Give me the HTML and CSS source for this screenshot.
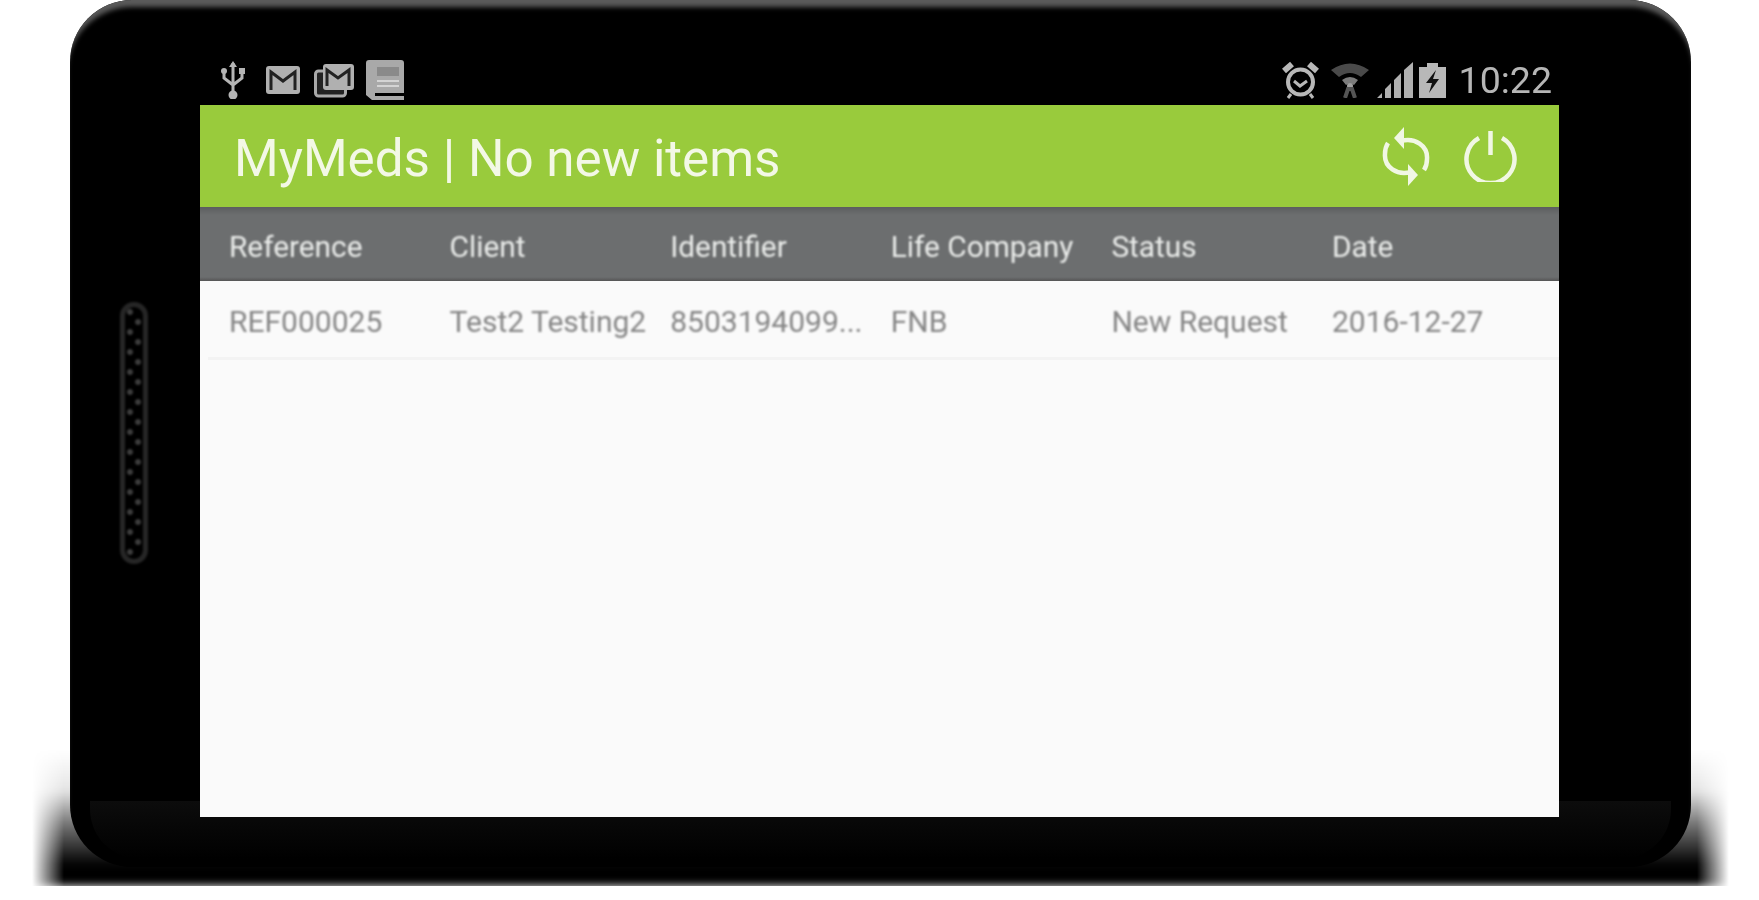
FILE: index.html
```html
<!DOCTYPE html>
<html lang="en">
<head>
  <meta charset="UTF-8">
  <meta name="viewport" content="width=device-width, initial-scale=1.0">
  <title>MyMeds</title>
  <link rel="stylesheet" href="styles.css">
</head>
<body>
  <div class="phone">
    <div class="speaker"></div>
    <div class="chin"></div>

    <div class="statusbar">
      <div class="status-left">
        <svg class="ico-usb" viewBox="0 0 26 38" fill="none" stroke="#b4b4b4" stroke-width="3">
          <path d="M13 2v32M4 11v6l9 7 9-7v-6"/>
          <circle cx="13" cy="34" r="3" fill="#b4b4b4"/>
          <circle cx="4" cy="10" r="3" fill="#b4b4b4" stroke="none"/>
          <rect x="19" y="7" width="6" height="6" fill="#b4b4b4" stroke="none"/>
          <path d="M13 0l4 6h-8z" fill="#b4b4b4" stroke="none"/>
        </svg>
        <svg class="ico-mail" viewBox="0 0 34 28">
          <rect width="34" height="28" rx="3" fill="#b0b0b0"/>
          <path d="M5 24V6l12 9 12-9v18" fill="none" stroke="#222" stroke-width="3"/>
        </svg>
        <svg class="ico-mails" viewBox="0 0 40 35">
          <rect x="1.500" y="8" width="30" height="25" rx="3" fill="#222" stroke="#a8a8a8" stroke-width="3"/>
          <rect x="9" y="1" width="31" height="26" rx="3" fill="#b0b0b0"/>
          <path d="M13 23V7l11 8 11-8v16" fill="none" stroke="#222" stroke-width="3"/>
        </svg>
        <svg class="ico-book" viewBox="0 0 38 40">
          <path d="M3 0h32a3 3 0 0 1 3 3v30H9v3h29v4H6l-6-5V3a3 3 0 0 1 3-3z" fill="#a9a9a9"/>
          <rect x="11" y="7" width="22" height="9" fill="#8a8a8a"/>
          <path d="M11 21h22M11 26h22" stroke="#d4d4d4" stroke-width="2"/>
        </svg>
      </div>
      <div class="status-right">
        <svg class="ico-alarm" viewBox="0 0 37 38" fill="none" stroke="#b8b8b8">
          <circle cx="18.500" cy="21" r="12.500" stroke-width="4"/>
          <path d="M12 20l6 5 7-5" stroke-width="3"/>
          <path d="M2 10l8-7M35 10l-8-7" stroke-width="6"/>
          <path d="M9 33l-3 4M28 33l3 4" stroke-width="3"/>
        </svg>
        <svg class="ico-wifi" viewBox="0 0 38 36">
          <path d="M0 8Q19-5 38 8L30 15Q19 7 8 15z" fill="#4a4a4a"/>
          <path d="M11 18q8-6 16 0l-4 5q-4-3-8 0z" fill="#7c7c7c"/>
          <circle cx="19" cy="24" r="3" fill="#a0a0a0"/>
          <path d="M14 36l3-9h4l3 9" fill="none" stroke="#555" stroke-width="4"/>
        </svg>
        <svg class="ico-signal" viewBox="0 0 36 36" fill="#b0b0b0">
          <path d="M0 36l5-5v5zM8 36V27l6-6v15zM17 36V18l7-7v25zM27 36V8l9-8v36z"/>
        </svg>
        <svg class="ico-battery" viewBox="0 0 27 36">
          <path d="M0 5h8V1h11v4h8v31H0z" fill="#b8b8b8"/>
          <path d="M17 8L7 21h6l-3 10 10-14h-6z" fill="#111"/>
        </svg>
        <span class="clock">10:22</span>
      </div>
    </div>

    <div class="screen">
      <div class="appbar">
        <h1 class="title">MyMeds | No new items</h1>
        <div class="actions">
          <svg class="ico-sync" viewBox="0 0 48 61" fill="none" stroke="#f1f7e4" stroke-width="4.500">
            <path d="M19 15C33 11 46 20 45 33c0 5-1 8-3 11"/>
            <path d="M29 46C15 50 2 41 3 28c0-5 1-8 3-11"/>
            <path d="M22 1L12 12l10 11z" fill="#f1f7e4" stroke="none"/>
            <path d="M26 38l10 11-10 11z" fill="#f1f7e4" stroke="none"/>
          </svg>
          <svg class="ico-power" viewBox="0 0 53 51" fill="none" stroke="#f1f7e4" stroke-width="4.500">
            <path d="M15 7a24 24 0 1 0 23 0"/>
            <path d="M26.500 0v24"/>
          </svg>
        </div>
      </div>

      <div class="grid head">
        <span>Reference</span>
        <span>Client</span>
        <span>Identifier</span>
        <span>Life Company</span>
        <span>Status</span>
        <span>Date</span>
      </div>

      <div class="grid row">
        <span>REF000025</span>
        <span>Test2 Testing2</span>
        <span>8503194099...</span>
        <span>FNB</span>
        <span>New Request</span>
        <span>2016-12-27</span>
      </div>
    </div>
  </div>
</body>
</html>
```

FILE: styles.css
```css
html,
body {
  margin: 0;
  height: 100%;
  overflow: hidden;
}

html {
  background-color: #fff;
}

body {
  font-family: Roboto, "Liberation Sans", sans-serif;
}

.phone {
  position: relative;
  width: 1621px;
  height: 867px;
  margin-left: 70px;
  background-color: #000;
  border-radius: 62px;
  box-shadow: inset 0 10px 5px -3px #5a5a5a;
}

/* soft shadow under the phone, fades upward and at both ends */
.phone::before {
  content: "";
  position: absolute;
  z-index: -1;
  left: -44px;
  right: -44px;
  top: 750px;
  bottom: -19px;
  background: linear-gradient(transparent, rgba(0, 0, 0, 0.1) 30%, rgba(0, 0, 0, 0.55) 55%, #000 85%);
  -webkit-mask-image: linear-gradient(90deg, transparent 6px, #000 38px, #000 calc(100% - 38px), transparent calc(100% - 6px));
  mask-image: linear-gradient(90deg, transparent 6px, #000 38px, #000 calc(100% - 38px), transparent calc(100% - 6px));
  filter: blur(4px);
}

.chin {
  position: absolute;
  left: 20px;
  right: 20px;
  top: 801px;
  height: 58px;
  background: linear-gradient(#0c0c0c, #000);
  border-radius: 0 0 50px 50px;
}

.speaker {
  position: absolute;
  left: 50px;
  top: 302px;
  width: 28px;
  height: 262px;
  box-sizing: border-box;
  border: 5px solid #262626;
  border-radius: 14px;
  background-image:
    radial-gradient(circle at 5px 5px, #3c3c3c 2.500px, transparent 3.500px),
    radial-gradient(circle at 13px 15px, #3c3c3c 2.500px, transparent 3.500px);
  background-size: 18px 20px;
  filter: blur(1px);
}

.statusbar {
  display: flex;
  justify-content: space-between;
  align-items: center;
  height: 105px;
  box-sizing: border-box;
  padding: 59px 139px 4px 150px;
}

.status-left,
.status-right {
  display: flex;
  align-items: center;
  filter: blur(0.7px);
}

.ico-usb { width: 26px; height: 38px; margin-right: 20px; }
.ico-mail { width: 34px; height: 28px; margin-right: 14px; }
.ico-mails { width: 40px; height: 35px; margin-right: 12px; }
.ico-book { width: 38px; height: 40px; }

.ico-alarm { width: 37px; height: 38px; margin-right: 12px; }
.ico-wifi { width: 38px; height: 36px; margin-right: 8px; }
.ico-signal { width: 36px; height: 36px; margin-right: 6px; }
.ico-battery { width: 27px; height: 36px; margin-right: 13px; }

.clock {
  font-size: 37.500px;
  line-height: 40px;
  color: #b6b6b6;
}

.screen {
  position: relative;
  height: 712px;
  margin: 0 132px 0 130px;
  background-color: #fafafa;
}

.appbar {
  display: flex;
  justify-content: space-between;
  align-items: center;
  height: 102px;
  padding: 0 42px 0 34px;
  background-color: #99cb3c;
}

.title {
  margin: 4px 0 0;
  font-size: 51.200px;
  font-weight: 400;
  color: #f3f8e6;
  filter: blur(0.7px);
}

.actions {
  display: flex;
  align-items: center;
  gap: 34px;
  filter: blur(0.6px);
}

.ico-sync { width: 48px; height: 61px; }
.ico-power { width: 53px; height: 51px; }

.grid {
  display: grid;
  grid-template-columns: repeat(6, 220.6px);
  align-items: center;
  padding-left: 29px;
}

.grid span {
  position: relative;
  top: 2px;
  white-space: nowrap;
  filter: blur(0.8px);
}

.head {
  height: 74px;
  font-size: 29.800px;
  color: #eceeec;
  background: linear-gradient(#5c5e5f, #6c6e6f 8px, #6c6e6f 70px, #555 74px);
}

.row {
  height: 76px;
  margin-left: 8px;
  padding-left: 21px;
  font-size: 30px;
  color: #858585;
  border-bottom: 3px solid #f3f3f3;
}
```
